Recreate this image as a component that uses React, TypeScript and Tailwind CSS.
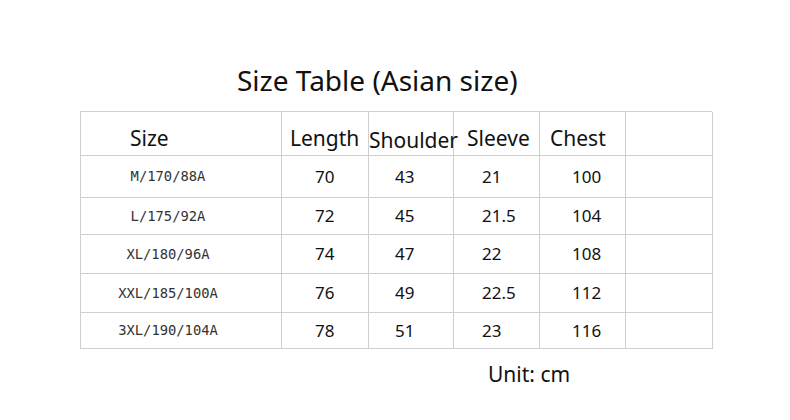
import React from "react";

const rows = [
  { size: "M/170/88A", length: "70", shoulder: "43", sleeve: "21", chest: "100", h: "h-[42px]" },
  { size: "L/175/92A", length: "72", shoulder: "45", sleeve: "21.5", chest: "104", h: "h-[37px]" },
  { size: "XL/180/96A", length: "74", shoulder: "47", sleeve: "22", chest: "108", h: "h-[39px]" },
  { size: "XXL/185/100A", length: "76", shoulder: "49", sleeve: "22.5", chest: "112", h: "h-[39px]" },
  { size: "3XL/190/104A", length: "78", shoulder: "51", sleeve: "23", chest: "116", h: "h-[36px]" },
];

const cell = "border-r border-b border-[#cfcfcf] flex items-center";

const App = () => {
  return (
    <div className="w-[790px] h-[420px] bg-white text-[#111] font-['Noto_Sans',sans-serif] flex flex-col">
      <h1 className="ml-[237px] mt-[62px] text-[28px] leading-[36px] font-normal">
        Size Table (Asian size)
      </h1>

      <div className="ml-[80px] mt-[13px] w-[632px] border-t border-l border-[#cfcfcf] grid grid-cols-[201px_87px_85px_86px_86px_87px]">
        <div className={`${cell} h-[44px] pt-[8px] pl-[49px] text-[21px] leading-[28px]`}>Size</div>
        <div className={`${cell} pt-[8px] pl-[8px] text-[21px] leading-[28px]`}>Length</div>
        <div className={`${cell} pt-[12px] pl-[0px] text-[21px] leading-[28px] whitespace-nowrap`}>Shoulder</div>
        <div className={`${cell} pt-[8px] pl-[13px] text-[21px] leading-[28px]`}>Sleeve</div>
        <div className={`${cell} pt-[8px] pl-[10px] text-[21px] leading-[28px]`}>Chest</div>
        <div className={cell}></div>

        {rows.map((r) => (
          <React.Fragment key={r.size}>
            <div className={`${cell} ${r.h} justify-center pr-[26px] font-['DejaVu_Sans_Mono',monospace] text-[13.8px] text-[#333]`}>
              {r.size}
            </div>
            <div className={`${cell} pl-[33px] text-[17px]`}>{r.length}</div>
            <div className={`${cell} pl-[26px] text-[17px]`}>{r.shoulder}</div>
            <div className={`${cell} pl-[28px] text-[17px]`}>{r.sleeve}</div>
            <div className={`${cell} pl-[32px] text-[17px]`}>{r.chest}</div>
            <div className={cell}></div>
          </React.Fragment>
        ))}
      </div>

      <p className="ml-[488px] mt-[10px] text-[21px] leading-[30px]">Unit: cm</p>
    </div>
  );
};

export default App;
